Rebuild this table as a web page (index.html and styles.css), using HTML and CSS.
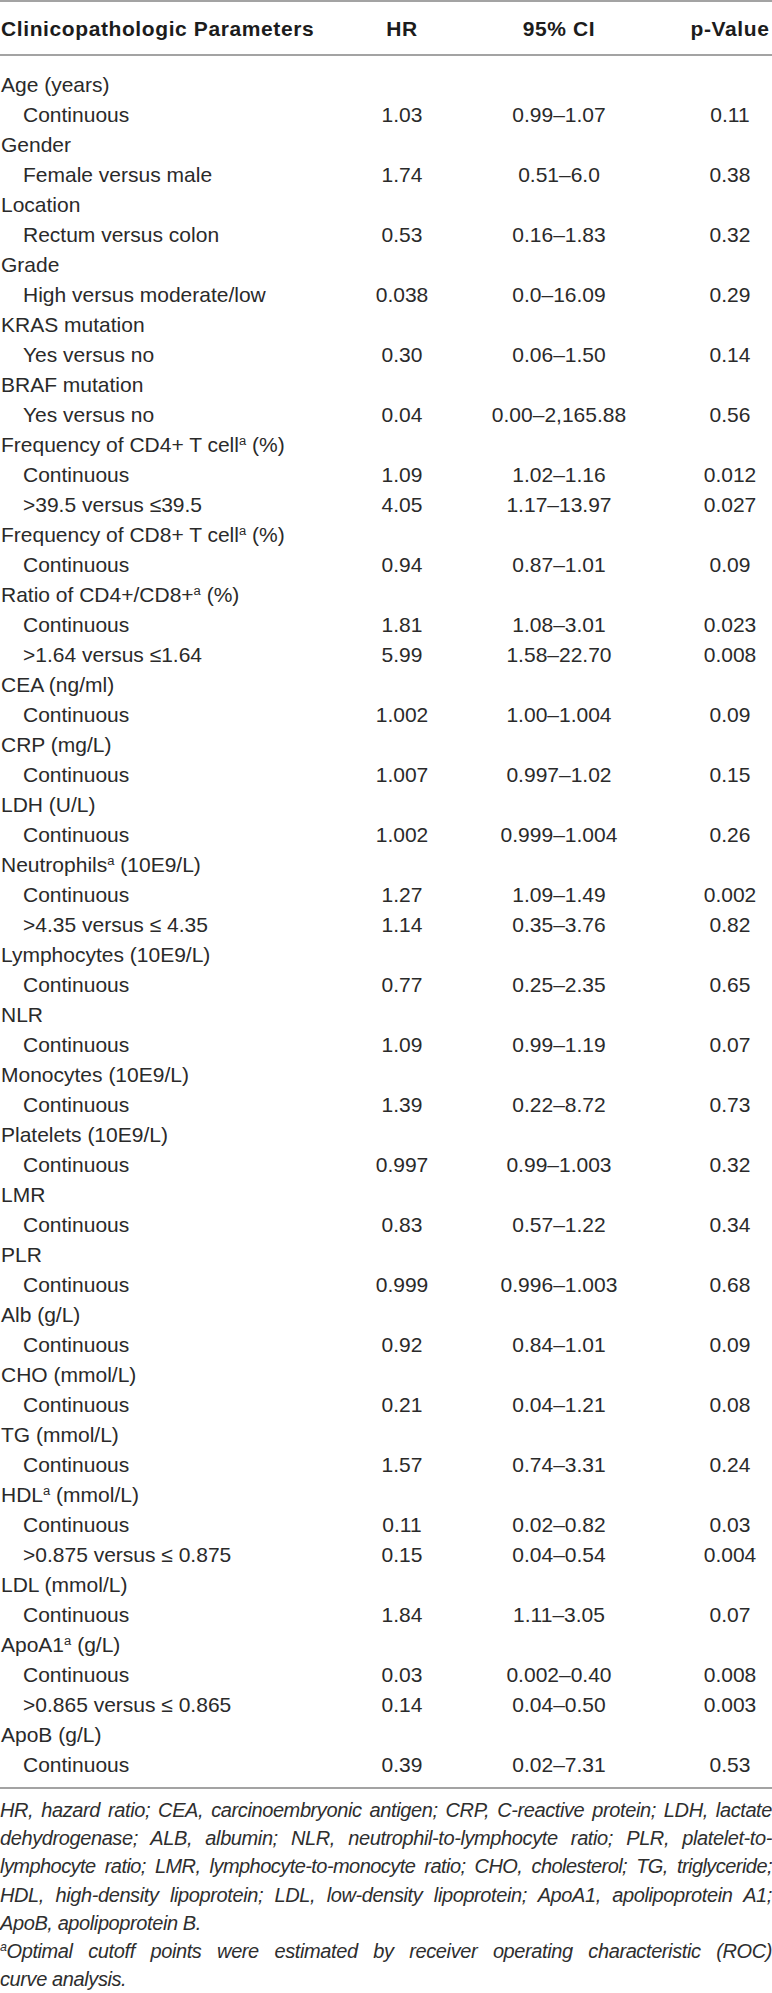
FILE: index.html
```html
<!DOCTYPE html>
<html lang="en">
<head>
<meta charset="utf-8">
<title>Cox regression table</title>
<link rel="stylesheet" href="styles.css">
</head>
<body>
<div class="page">
<table class="data">
  <colgroup>
    <col class="c-label">
    <col class="c-hr">
    <col class="c-ci">
    <col class="c-p">
  </colgroup>
  <thead>
    <tr>
      <th class="lbl">Clinicopathologic Parameters</th>
      <th>HR</th>
      <th>95% CI</th>
      <th class="pv">p-Value</th>
    </tr>
  </thead>
  <tbody>
    <tr class="grp"><td colspan="4">Age (years)</td></tr>
    <tr class="sub"><td>Continuous</td><td>1.03</td><td>0.99–1.07</td><td class="pv">0.11</td></tr>
    <tr class="grp"><td colspan="4">Gender</td></tr>
    <tr class="sub"><td>Female versus male</td><td>1.74</td><td>0.51–6.0</td><td class="pv">0.38</td></tr>
    <tr class="grp"><td colspan="4">Location</td></tr>
    <tr class="sub"><td>Rectum versus colon</td><td>0.53</td><td>0.16–1.83</td><td class="pv">0.32</td></tr>
    <tr class="grp"><td colspan="4">Grade</td></tr>
    <tr class="sub"><td>High versus moderate/low</td><td>0.038</td><td>0.0–16.09</td><td class="pv">0.29</td></tr>
    <tr class="grp"><td colspan="4">KRAS mutation</td></tr>
    <tr class="sub"><td>Yes versus no</td><td>0.30</td><td>0.06–1.50</td><td class="pv">0.14</td></tr>
    <tr class="grp"><td colspan="4">BRAF mutation</td></tr>
    <tr class="sub"><td>Yes versus no</td><td>0.04</td><td>0.00–2,165.88</td><td class="pv">0.56</td></tr>
    <tr class="grp"><td colspan="4">Frequency of CD4+ T cell<sup>a</sup> (%)</td></tr>
    <tr class="sub"><td>Continuous</td><td>1.09</td><td>1.02–1.16</td><td class="pv">0.012</td></tr>
    <tr class="sub"><td>&gt;39.5 versus ≤39.5</td><td>4.05</td><td>1.17–13.97</td><td class="pv">0.027</td></tr>
    <tr class="grp"><td colspan="4">Frequency of CD8+ T cell<sup>a</sup> (%)</td></tr>
    <tr class="sub"><td>Continuous</td><td>0.94</td><td>0.87–1.01</td><td class="pv">0.09</td></tr>
    <tr class="grp"><td colspan="4">Ratio of CD4+/CD8+<sup>a</sup> (%)</td></tr>
    <tr class="sub"><td>Continuous</td><td>1.81</td><td>1.08–3.01</td><td class="pv">0.023</td></tr>
    <tr class="sub"><td>&gt;1.64 versus ≤1.64</td><td>5.99</td><td>1.58–22.70</td><td class="pv">0.008</td></tr>
    <tr class="grp"><td colspan="4">CEA (ng/ml)</td></tr>
    <tr class="sub"><td>Continuous</td><td>1.002</td><td>1.00–1.004</td><td class="pv">0.09</td></tr>
    <tr class="grp"><td colspan="4">CRP (mg/L)</td></tr>
    <tr class="sub"><td>Continuous</td><td>1.007</td><td>0.997–1.02</td><td class="pv">0.15</td></tr>
    <tr class="grp"><td colspan="4">LDH (U/L)</td></tr>
    <tr class="sub"><td>Continuous</td><td>1.002</td><td>0.999–1.004</td><td class="pv">0.26</td></tr>
    <tr class="grp"><td colspan="4">Neutrophils<sup>a</sup> (10E9/L)</td></tr>
    <tr class="sub"><td>Continuous</td><td>1.27</td><td>1.09–1.49</td><td class="pv">0.002</td></tr>
    <tr class="sub"><td>&gt;4.35 versus ≤ 4.35</td><td>1.14</td><td>0.35–3.76</td><td class="pv">0.82</td></tr>
    <tr class="grp"><td colspan="4">Lymphocytes (10E9/L)</td></tr>
    <tr class="sub"><td>Continuous</td><td>0.77</td><td>0.25–2.35</td><td class="pv">0.65</td></tr>
    <tr class="grp"><td colspan="4">NLR</td></tr>
    <tr class="sub"><td>Continuous</td><td>1.09</td><td>0.99–1.19</td><td class="pv">0.07</td></tr>
    <tr class="grp"><td colspan="4">Monocytes (10E9/L)</td></tr>
    <tr class="sub"><td>Continuous</td><td>1.39</td><td>0.22–8.72</td><td class="pv">0.73</td></tr>
    <tr class="grp"><td colspan="4">Platelets (10E9/L)</td></tr>
    <tr class="sub"><td>Continuous</td><td>0.997</td><td>0.99–1.003</td><td class="pv">0.32</td></tr>
    <tr class="grp"><td colspan="4">LMR</td></tr>
    <tr class="sub"><td>Continuous</td><td>0.83</td><td>0.57–1.22</td><td class="pv">0.34</td></tr>
    <tr class="grp"><td colspan="4">PLR</td></tr>
    <tr class="sub"><td>Continuous</td><td>0.999</td><td>0.996–1.003</td><td class="pv">0.68</td></tr>
    <tr class="grp"><td colspan="4">Alb (g/L)</td></tr>
    <tr class="sub"><td>Continuous</td><td>0.92</td><td>0.84–1.01</td><td class="pv">0.09</td></tr>
    <tr class="grp"><td colspan="4">CHO (mmol/L)</td></tr>
    <tr class="sub"><td>Continuous</td><td>0.21</td><td>0.04–1.21</td><td class="pv">0.08</td></tr>
    <tr class="grp"><td colspan="4">TG (mmol/L)</td></tr>
    <tr class="sub"><td>Continuous</td><td>1.57</td><td>0.74–3.31</td><td class="pv">0.24</td></tr>
    <tr class="grp"><td colspan="4">HDL<sup>a</sup> (mmol/L)</td></tr>
    <tr class="sub"><td>Continuous</td><td>0.11</td><td>0.02–0.82</td><td class="pv">0.03</td></tr>
    <tr class="sub"><td>&gt;0.875 versus ≤ 0.875</td><td>0.15</td><td>0.04–0.54</td><td class="pv">0.004</td></tr>
    <tr class="grp"><td colspan="4">LDL (mmol/L)</td></tr>
    <tr class="sub"><td>Continuous</td><td>1.84</td><td>1.11–3.05</td><td class="pv">0.07</td></tr>
    <tr class="grp"><td colspan="4">ApoA1<sup>a</sup> (g/L)</td></tr>
    <tr class="sub"><td>Continuous</td><td>0.03</td><td>0.002–0.40</td><td class="pv">0.008</td></tr>
    <tr class="sub"><td>&gt;0.865 versus ≤ 0.865</td><td>0.14</td><td>0.04–0.50</td><td class="pv">0.003</td></tr>
    <tr class="grp"><td colspan="4">ApoB (g/L)</td></tr>
    <tr class="sub"><td>Continuous</td><td>0.39</td><td>0.02–7.31</td><td class="pv">0.53</td></tr>
  </tbody>
</table>
<div class="notes">
  <p class="note">
    <span class="ln">HR, hazard ratio; CEA, carcinoembryonic antigen; CRP, C-reactive protein; LDH, lactate</span>
    <span class="ln">dehydrogenase; ALB, albumin; NLR, neutrophil-to-lymphocyte ratio; PLR, platelet-to-</span>
    <span class="ln tight">lymphocyte ratio; LMR, lymphocyte-to-monocyte ratio; CHO, cholesterol; TG, triglyceride;</span>
    <span class="ln">HDL, high-density lipoprotein; LDL, low-density lipoprotein; ApoA1, apolipoprotein A1;</span>
    <span class="ln last">ApoB, apolipoprotein B.</span>
  </p>
  <p class="note">
    <span class="ln"><sup>a</sup>Optimal cutoff points were estimated by receiver operating characteristic (ROC)</span>
    <span class="ln last">curve analysis.</span>
  </p>
</div>
</div>
</body>
</html>
```

FILE: styles.css
```css
html, body {
  margin: 0;
  padding: 0;
  background: #ffffff;
}

.page {
  width: 772px;
  font-family: "Liberation Sans", Arial, sans-serif;
  color: #2a2a2a;
}

.data {
  width: 772px;
  border-collapse: collapse;
  table-layout: fixed;
  font-size: 21px;
  line-height: 30px;
  border-top: 2px solid #a3a3a3;
  border-bottom: 2px solid #a3a3a3;
}

.c-label { width: 344px; }
.c-hr { width: 116px; }
.c-ci { width: 198px; }
.c-p { width: 114px; }

.data th {
  font-weight: bold;
  color: #1c1c1c;
  letter-spacing: 0.6px;
  text-align: center;
  padding: 12px 0 10px;
  border-bottom: 2px solid #a3a3a3;
  white-space: nowrap;
}

.data th.lbl {
  text-align: left;
  padding-left: 1px;
}

.data td {
  padding: 0;
  text-align: center;
  white-space: nowrap;
}

.data .pv {
  padding-left: 30px;
}

.data tr.grp td {
  text-align: left;
  padding-left: 1px;
}

.data tr.sub td:first-child {
  text-align: left;
  padding-left: 23px;
}

.data tbody tr:first-child td {
  padding-top: 14px;
}

.data tbody tr:last-child td {
  padding-bottom: 7px;
}

sup {
  font-size: 0.62em;
  line-height: 0;
  vertical-align: 0.55em;
}

.notes {
  margin-top: 7px;
  font-style: italic;
  font-size: 20px;
  line-height: 28.2px;
  letter-spacing: -0.4px;
  color: #2e2e2e;
}

.note {
  margin: 0;
}

.ln {
  display: block;
  text-align: justify;
  text-align-last: justify;
}

.ln.tight {
  letter-spacing: -0.55px;
}

.ln.last {
  text-align: left;
  text-align-last: left;
}
```
